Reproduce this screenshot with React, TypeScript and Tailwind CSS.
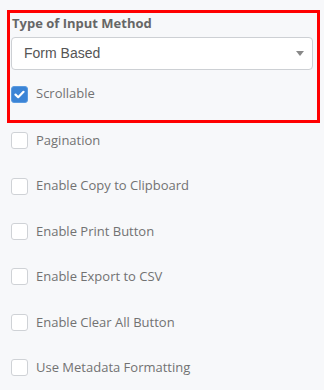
import React from "react";

const items = [
  "Pagination",
  "Enable Copy to Clipboard",
  "Enable Print Button",
  "Enable Export to CSV",
  "Enable Clear All Button",
  "Use Metadata Formatting",
];

function Box({ checked }: { checked?: boolean }) {
  if (checked) {
    return (
      <span className="flex h-[17px] w-[17px] shrink-0 items-center justify-center rounded-[3px] border border-[#5b9be0] bg-[#3b84d6]">
        <svg width="11" height="9" viewBox="0 0 11 9">
          <path d="M1.5 4.6 L4.2 7.2 L9.5 1.8" stroke="white" strokeWidth="2.2" fill="none" strokeLinecap="round" strokeLinejoin="round" />
        </svg>
      </span>
    );
  }
  return <span className="h-[17px] w-[17px] shrink-0 rounded-[3px] border border-[#cfd2d6] bg-white" />;
}

export default function App() {
  return (
    <div className="relative h-[390px] w-[324px] overflow-hidden bg-[#f7f8fa] px-[11px] pt-[14px]" style={{ fontFamily: '"Open Sans", sans-serif' }}>
      <div className="pointer-events-none absolute left-[7px] top-[10px] h-[113px] w-[313px] border-[3px] border-[#ff0000]" />
      <div className="pl-[1px] text-[13px] font-bold leading-[18px] text-[#666666]">Type of Input Method</div>
      <div className="mt-[5px] flex h-[33px] w-[302px] items-center justify-between rounded-[4px] border border-[#cdd0d4] bg-white pl-[12px] pr-[8px]">
        <span className="text-[14px] text-[#555555]" style={{ fontFamily: '"Liberation Sans", Arial, sans-serif' }}>Form Based</span>
        <svg width="8" height="5" viewBox="0 0 8 5"><path d="M0 0 H8 L4 5 Z" fill="#888888" /></svg>
      </div>
      <div className="flex h-[48px] items-center gap-[8px]">
        <Box checked />
        <span className="text-[13px] text-[#727272]">Scrollable</span>
      </div>
      {items.map((t) => (
        <div key={t} className="flex h-[45.4px] items-center gap-[8px]">
          <Box />
          <span className="text-[13px] text-[#727272]">{t}</span>
        </div>
      ))}
    </div>
  );
}
